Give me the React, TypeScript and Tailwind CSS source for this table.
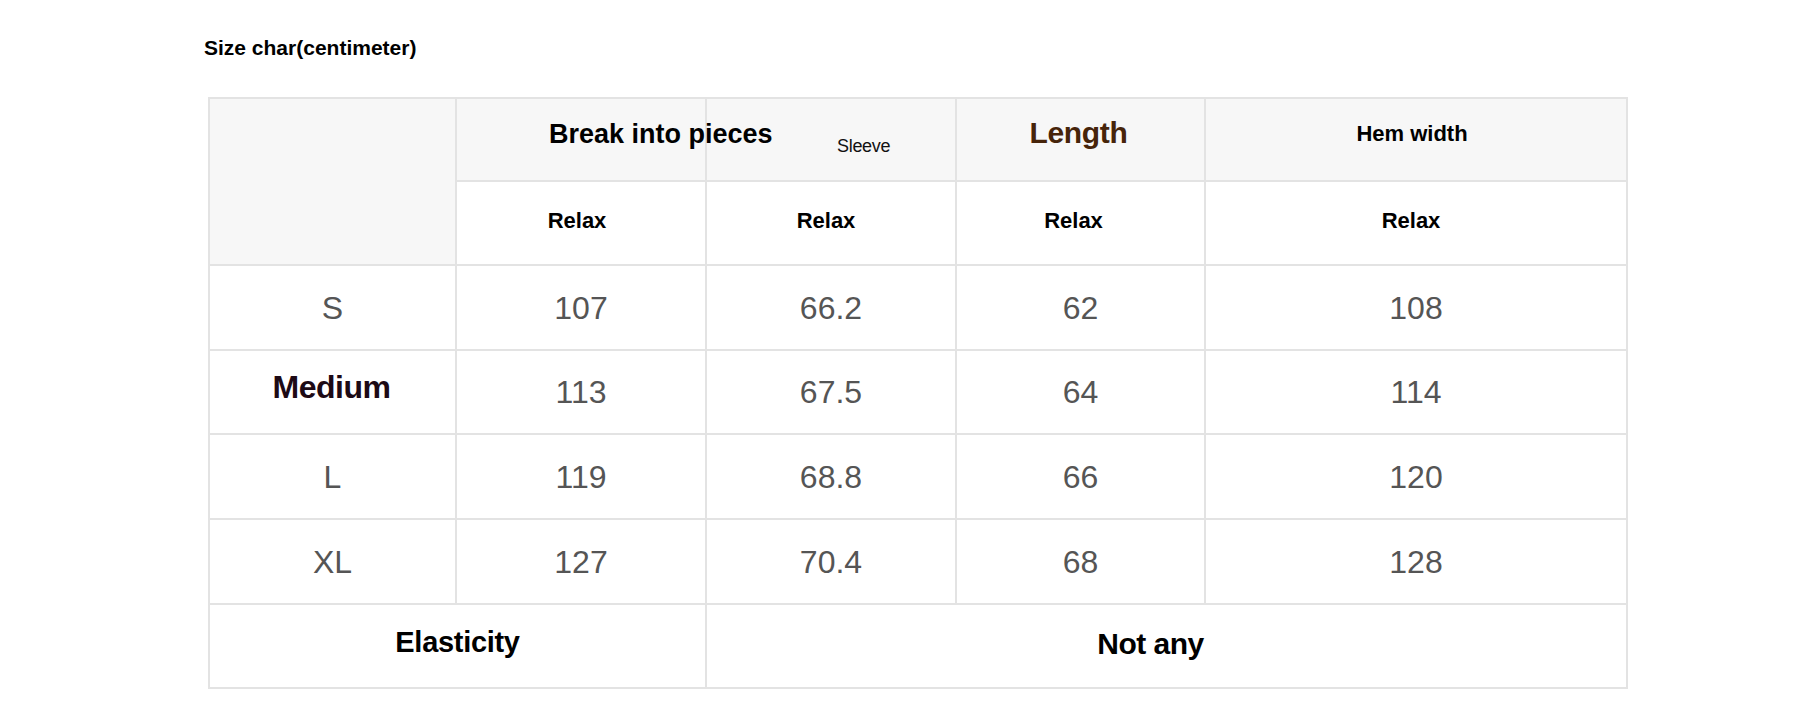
const sans = "font-['Liberation_Sans',Arial,sans-serif]";

type Row = { size: string; bold?: boolean; values: string[] };

const rows: Row[] = [
  { size: 'S', values: ['107', '66.2', '62', '108'] },
  { size: 'Medium', bold: true, values: ['113', '67.5', '64', '114'] },
  { size: 'L', values: ['119', '68.8', '66', '120'] },
  { size: 'XL', values: ['127', '70.4', '68', '128'] },
];

const heights = ['h-[85px]', 'h-[84px]', 'h-[85px]', 'h-[85px]'];

const cell = 'flex items-center justify-center border-r-2 border-b-2 border-[#e3e3e3]';

export default function App() {
  return (
    <div className={`w-[1817px] h-[727px] overflow-hidden bg-white ${sans}`}>
      <div className="pl-[204px] pt-[36px] text-[21px] leading-[24px] font-bold text-black">
        Size char(centimeter)
      </div>

      <div className="ml-[208px] mt-[37px] w-[1420px] grid grid-cols-[247px_250px_250px_249px_422px] border-t-2 border-l-2 border-[#e3e3e3]">
        {/* header row 1 */}
        <div className={`${cell} row-span-2 bg-[#f7f7f7]`} />
        <div className={`${cell} h-[83px] bg-[#f7f7f7] justify-start pl-[92px] pb-[10px] relative z-10`}>
          <span className="whitespace-nowrap text-[27px] font-bold text-black">Break into pieces</span>
        </div>
        <div className={`${cell} h-[83px] bg-[#f7f7f7] justify-start pl-[130px] pt-[14px]`}>
          <span className="text-[18px] text-[#111] tracking-[-0.3px]">Sleeve</span>
        </div>
        <div className={`${cell} h-[83px] bg-[#f7f7f7] pb-[14px] pr-[4px]`}>
          <span className="text-[30px] font-bold text-[#46240a] tracking-[-0.3px]">Length</span>
        </div>
        <div className={`${cell} h-[83px] bg-[#f7f7f7] pb-[12px] pr-[8px]`}>
          <span className="text-[22px] font-bold text-black">Hem width</span>
        </div>

        {/* header row 2 */}
        {['pr-[8px]', 'pr-[10px]', 'pr-[14px]', 'pr-[10px]'].map((p, i) => (
          <div key={i} className={`${cell} h-[84px] bg-white pb-[6px] ${p}`}>
            <span className="text-[22px] font-bold text-black">Relax</span>
          </div>
        ))}

        {/* data rows */}
        {rows.map((r, ri) => (
          <div key={r.size} className="contents">
            <div className={`${cell} ${heights[ri]} ${r.bold ? 'pb-[10px] pr-[2px]' : ''}`}>
              {r.bold ? (
                <span className="text-[32px] font-bold text-[#1d0a15] tracking-[-0.5px]">{r.size}</span>
              ) : (
                <span className="text-[32px] text-[#555]">{r.size}</span>
              )}
            </div>
            {r.values.map((v, vi) => (
              <div key={vi} className={`${cell} ${heights[ri]}`}>
                <span className="text-[32px] text-[#555]">{v}</span>
              </div>
            ))}
          </div>
        ))}

        {/* elasticity row */}
        <div className={`${cell} col-span-2 h-[84px] pb-[6px]`}>
          <span className="text-[29px] font-bold text-black tracking-[-0.3px]">Elasticity</span>
        </div>
        <div className={`${cell} col-span-3 h-[84px] pb-[6px] pr-[32px]`}>
          <span className="text-[30px] font-bold text-black tracking-[-0.5px]">Not any</span>
        </div>
      </div>
    </div>
  );
}
